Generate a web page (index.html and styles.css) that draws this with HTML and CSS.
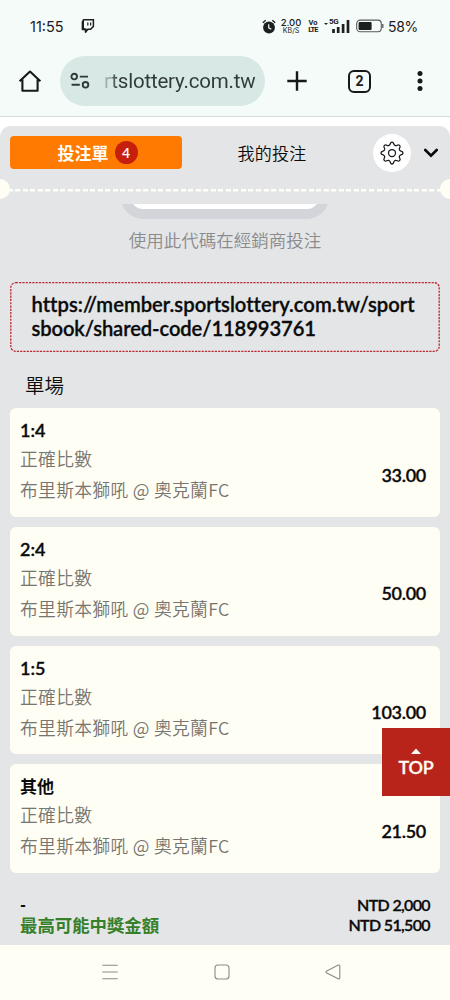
FILE: index.html
```html
<!DOCTYPE html>
<html lang="zh-Hant">
<head>
<meta charset="utf-8">
<meta name="viewport" content="width=device-width">
<title>投注單</title>
<link rel="stylesheet" href="styles.css">
</head>
<body>
<div class="phone">
  <header class="chrome">
    <div class="status">
      <span class="clock">11:55</span>
      <svg class="twitch" width="14" height="14" viewBox="0 0 14 14"><path d="M2.6 .8H12.4V7.4L9.6 10.2H7L4.9 12.6V10.2H1.4V3Z" fill="none" stroke="#1c2120" stroke-width="1.5"/><path d="M1.2 2.6L3 1V9L5.5 10.3V13.4H3.7V11.2H1.2Z" fill="#1c2120"/><path d="M6.8 3.4V6.4M9.6 3.4V6.4" stroke="#1c2120" stroke-width="1.2"/></svg>
      <div class="status-right">
        <svg class="alarm" width="14" height="15" viewBox="0 0 14 15"><circle cx="7" cy="8.5" r="5.9" fill="#1c2120"/><path d="M.8 3.8L3.7 1.3M13.2 3.8L10.3 1.3" stroke="#1c2120" stroke-width="1.4"/><path d="M6.7 5.2V8.8L9.3 10.3" fill="none" stroke="#f5fbf9" stroke-width="1.2"/></svg>
        <div class="rate"><b>2.00</b><span>KB/S</span></div>
        <div class="volte"><span>Vo</span><span>LTE</span></div>
        <div class="signal"><i></i><b>5G</b><svg width="20" height="13" viewBox="0 0 20 13"><path d="M3.5 9V13M8.2 7V13M13.1 4V13M18 0V13" stroke="#1c2120" stroke-width="2.7"/></svg></div>
        <svg class="battery" width="28" height="14" viewBox="0 0 28 14"><rect x=".7" y="1.1" width="24.6" height="11.6" rx="3.5" fill="none" stroke="#555b5a" stroke-width="1.1"/><rect x="2.6" y="2.9" width="13" height="8" rx="1" fill="#1c2120"/><path d="M26.8 5V9" stroke="#555b5a" stroke-width="1.3"/></svg>
        <span class="percent">58%</span>
      </div>
    </div>
    <div class="toolbar">
      <svg class="home" width="24" height="24" viewBox="0 0 24 24"><path d="M1.6 12.2L12 2.5L22.4 12.2M4.4 10.5V21.8H19.6V10.5" fill="none" stroke="#151a19" stroke-width="2.1" stroke-linejoin="round"/></svg>
      <div class="address">
        <svg width="20" height="18" viewBox="0 0 20 18"><g fill="none" stroke="#303a39" stroke-width="1.9"><circle cx="4.2" cy="4.6" r="2.8"/><path d="M9.8 4.6H18M1.6 12.8H9.8"/><circle cx="15.5" cy="12.8" r="2.8"/></g></svg>
        <span class="url">rtslottery.com.tw</span>
      </div>
      <svg class="plus" width="20" height="20" viewBox="0 0 20 20"><path d="M10 .3V19.7M.3 10H19.7" stroke="#151a19" stroke-width="2.4"/></svg>
      <span class="tabs-count">2</span>
      <svg class="more" width="6" height="20" viewBox="0 0 6 20"><g fill="#151a19"><circle cx="3" cy="2.5" r="2.5"/><circle cx="3" cy="10" r="2.5"/><circle cx="3" cy="17.5" r="2.5"/></g></svg>
    </div>
  </header>

  <main class="slip">
    <nav class="slip-tabs">
      <div class="tab-active">投注單<span class="count">4</span></div>
      <div class="tab-mine">我的投注</div>
      <div class="gear"><svg width="24" height="24" viewBox="0 0 24 24"><path d="M12 1Q13.2 1 13.6 2.5Q14 4.1 15.3 4.6Q16.2 4.9 17.3 4.2Q18.6 3.4 19.6 4.4Q20.6 5.4 19.8 6.7Q19.1 7.8 19.4 8.7Q19.9 10 21.5 10.4Q23 10.8 23 12Q23 13.2 21.5 13.6Q19.9 14 19.4 15.3Q19.1 16.2 19.8 17.3Q20.6 18.6 19.6 19.6Q18.6 20.6 17.3 19.8Q16.2 19.1 15.3 19.4Q14 19.9 13.6 21.5Q13.2 23 12 23Q10.8 23 10.4 21.5Q10 19.9 8.7 19.4Q7.8 19.1 6.7 19.8Q5.4 20.6 4.4 19.6Q3.4 18.6 4.2 17.3Q4.9 16.2 4.6 15.3Q4.1 14 2.5 13.6Q1 13.2 1 12Q1 10.8 2.5 10.4Q4.1 10 4.6 8.7Q4.9 7.8 4.2 6.7Q3.4 5.4 4.4 4.4Q5.4 3.4 6.7 4.2Q7.8 4.9 8.7 4.6Q10 4.1 10.4 2.5Q10.8 1 12 1Z" fill="none" stroke="#16191c" stroke-width="1.25"/><circle cx="12" cy="12" r="3.5" fill="none" stroke="#16191c" stroke-width="1.25"/></svg></div>
      <svg class="chevron" width="14" height="10" viewBox="0 0 14 10"><path d="M1.3 2L7 7.7L12.7 2" fill="none" stroke="#080808" stroke-width="2.6" stroke-linecap="round"/></svg>
    </nav>
    <div class="perforation"></div>
    <div class="code-clip"><div class="code-box"></div></div>
    <p class="hint">使用此代碼在經銷商投注</p>
    <div class="link"><svg class="link-border" width="430" height="70" viewBox="0 0 430 70"><rect x=".8" y=".7" width="428.4" height="68.6" rx="5" fill="none" stroke="#bd2731" stroke-width="1.3" stroke-dasharray="2.2 1.1"/></svg><span>https://member.sportslottery.com.tw/sport</span><span class="second">sbook/shared-code/118993761</span></div>
    <h2 class="section">單場</h2>
    <div class="cards">
      <article class="card"><div><h3>1:4</h3><p>正確比數</p><p class="match">布里斯本獅吼 @ 奧克蘭FC</p></div><b class="odds">33.00</b></article>
      <article class="card"><div><h3>2:4</h3><p>正確比數</p><p class="match">布里斯本獅吼 @ 奧克蘭FC</p></div><b class="odds">50.00</b></article>
      <article class="card"><div><h3>1:5</h3><p>正確比數</p><p class="match">布里斯本獅吼 @ 奧克蘭FC</p></div><b class="odds">103.00</b></article>
      <article class="card"><div><h3 class="cjk">其他</h3><p>正確比數</p><p class="match">布里斯本獅吼 @ 奧克蘭FC</p></div><b class="odds">21.50</b></article>
    </div>
    <div class="totals">
      <div class="row"><b class="dash">-</b><span class="amount">NTD 2,000</span></div>
      <div class="row"><span class="win">最高可能中獎金額</span><span class="amount">NTD 51,500</span></div>
    </div>
  </main>

  <footer class="navbar">
    <svg width="16" height="16" viewBox="0 0 16 16"><path d="M.3 1.2H15.7M.3 8H15.7M.3 14.8H15.7" stroke="#8b8a86" stroke-width="1.1"/></svg>
    <svg width="16" height="16" viewBox="0 0 16 16"><rect x="1" y="1" width="14" height="14" rx="3" fill="none" stroke="#8b8a86" stroke-width="1.1"/></svg>
    <svg width="16" height="16" viewBox="0 0 16 16"><path d="M1.3 7.3L13.2 1.1Q14.8 .7 14.8 2V14Q14.8 15.3 13.2 14.7L1.3 8.7Q.6 8 1.3 7.3Z" fill="none" stroke="#8b8a86" stroke-width="1.1"/></svg>
  </footer>
  <div class="top-button"><svg width="10" height="6" viewBox="0 0 10 6"><path d="M0 6L5 .4L10 6Z" fill="#fffdf5"/></svg><span>TOP</span></div>
</div>
</body>
</html>
```
FILE: styles.css
```css
* { box-sizing: border-box; margin: 0; padding: 0; }
body { background: #fff; }
svg { display: block; flex: none; }
.phone { position: relative; width: 450px; height: 1000px; overflow: hidden; display: flex; flex-direction: column; background: #fff; font-family: Lato, "Noto Sans CJK TC", sans-serif; color: #0b0b0b; white-space: nowrap; }

.chrome { height: 117px; flex: none; background: #f5fbf9; border-bottom: 1px solid #d3d9d8; font-family: Roboto, sans-serif; color: #1c2120; }
.status { height: 52px; padding: 0 33px 0 30px; display: flex; align-items: center; font-family: Inter, sans-serif; }
.clock { font-size: 14.5px; width: 34px; }
.twitch { margin-left: 17px; }
.status-right { margin-left: auto; display: flex; align-items: center; }
.alarm { margin-right: 1px; }
.rate { width: 22px; margin-left: 3px; display: flex; flex-direction: column; align-items: center; line-height: 7px; font-size: 7px; }
.rate b { font-size: 9.5px; line-height: 9.5px; font-weight: 500; }
.volte { width: 10px; margin-left: 6px; display: flex; flex-direction: column; align-items: center; font: bold 7.5px/7.5px Roboto, sans-serif; letter-spacing: -0.9px; }
.volte span:first-child { letter-spacing: 0; }
.signal { position: relative; width: 26px; height: 14px; margin-left: 6px; padding: 1px 0 0 6px; }
.signal b { position: absolute; left: 5px; top: -2px; font: 700 8px/9px Roboto, sans-serif; letter-spacing: -0.3px; }
.signal i { position: absolute; left: 0; top: 4px; border: 2px solid transparent; border-top: 2px solid #1c2120; border-bottom: 0; }
.battery { margin-left: 6px; }
.percent { font-size: 14px; margin-left: 4px; width: 29px; letter-spacing: -0.3px; }
.toolbar { height: 64px; padding: 4px 27px 10px 18px; display: flex; align-items: center; }
.address { width: 205px; height: 50px; margin-left: 18px; border-radius: 25px; background: #d7e8e5; display: flex; align-items: center; padding-left: 10px; }
.url { margin-left: 14px; font-size: 20.5px; letter-spacing: -0.2px; line-height: 28px; background: linear-gradient(90deg, #b9c9c7, #303a39 14px); background-clip: text; -webkit-background-clip: text; color: transparent; }
.plus { margin-left: 22px; }
.tabs-count { width: 23px; height: 23px; margin-left: 41px; border: 2.2px solid #151a19; border-radius: 6px; text-align: center; font-size: 14px; font-weight: 700; line-height: 19px; }
.more { margin-left: auto; }

.slip { position: relative; flex: 1; margin-top: 9px; border-radius: 11px 11px 0 0; background: #e3e5e7; }
.slip-tabs { height: 53px; padding-left: 10px; display: flex; align-items: center; }
.tab-active { width: 172px; height: 33px; border-radius: 4px; background: #ff7a00; color: #fffdf5; font-size: 17px; font-weight: 700; display: flex; align-items: center; justify-content: center; gap: 6px; padding-left: 3px; }
.count { width: 23px; height: 23px; border-radius: 50%; background: #c71f0d; font: 500 14px/23px "Noto Sans", sans-serif; text-align: center; }
.tab-mine { width: 180px; text-align: center; font-size: 17px; font-weight: 350; letter-spacing: 0.3px; }
.gear { width: 38px; height: 38px; margin-left: 11px; border-radius: 50%; background: #fff; display: grid; place-items: center; }
.chevron { margin-left: 13px; margin-top: 1px; }
.perforation { position: relative; height: 20px; margin-top: 1px; background: repeating-linear-gradient(90deg, #fffef5 0 5px, transparent 5px 7.53px) 0 9px / 100% 2.5px no-repeat; }
.perforation::before, .perforation::after { content: ""; position: absolute; top: -1px; width: 20px; height: 20px; border-radius: 50%; background: #fffef5; }
.perforation::before { left: -10px; }
.perforation::after { right: -10px; }
.code-clip { height: 15px; margin: 4px auto 0; width: 210px; overflow: hidden; display: flex; align-items: flex-end; justify-content: center; }
.code-box { flex: none; width: 208px; height: 44px; border: 10px solid #d4d5da; border-radius: 24px; background: #fff; }
.hint { margin-top: 8px; text-align: center; color: #8b8b8d; font-size: 17.5px; font-weight: 350; line-height: 28px; }
.link { position: relative; height: 70px; margin: 27px 10px 0; padding: 11px 0 0 21.5px; font-size: 20.2px; font-weight: 600; font-variant-ligatures: none; letter-spacing: 0.03px; -webkit-text-stroke: 0.3px #0b0b0b; line-height: 23.5px; display: flex; flex-direction: column; }
.link-border { position: absolute; inset: 0; }
.second { letter-spacing: -0.1px; }
.section { margin: 20px 0 0 25px; height: 36px; font-size: 19.5px; font-weight: 350; line-height: 28px; }
.cards { display: grid; gap: 10px; padding: 0 10px; }
.card { height: 108.8px; border-radius: 6px; background: #fffef5; padding: 9px 14px 0 10px; display: flex; justify-content: space-between; }
.card h3 { font-size: 18px; font-weight: 600; -webkit-text-stroke: 0.3px #0b0b0b; line-height: 27px; }
.card h3.cjk { font-size: 17px; font-weight: 700; -webkit-text-stroke: 0; }
.card p { color: #777570; font-family: "Noto Sans CJK TC", sans-serif; font-size: 17.8px; font-weight: 350; letter-spacing: 0.3px; line-height: 28px; }
.card .match { margin-top: 3px; }
.odds { margin-top: 42.5px; font-size: 18px; font-weight: 600; letter-spacing: -0.3px; -webkit-text-stroke: 0.3px #0b0b0b; line-height: 30px; }
.totals { padding: 22px 20px 0; font-size: 16px; font-weight: 600; letter-spacing: -0.65px; line-height: 20px; }
.row { display: flex; justify-content: space-between; height: 20px; }
.amount { -webkit-text-stroke: 0.3px #0b0b0b; }
.dash { font-weight: 900; }
.win { color: #36802a; font-size: 17.4px; font-weight: 700; letter-spacing: 0; line-height: 21px; }
.navbar { position: relative; height: 55px; flex: none; background: #fffef5; padding: 0 109px 1px 102px; display: flex; align-items: center; justify-content: space-between; }
.top-button { position: absolute; right: 0; top: 728px; width: 68px; height: 68px; background: #b82419; color: #fffdf5; display: flex; flex-direction: column; align-items: center; padding-top: 20px; font-size: 18px; font-weight: 600; letter-spacing: -0.2px; -webkit-text-stroke: 0.3px #fffdf5; line-height: 27px; }
```
